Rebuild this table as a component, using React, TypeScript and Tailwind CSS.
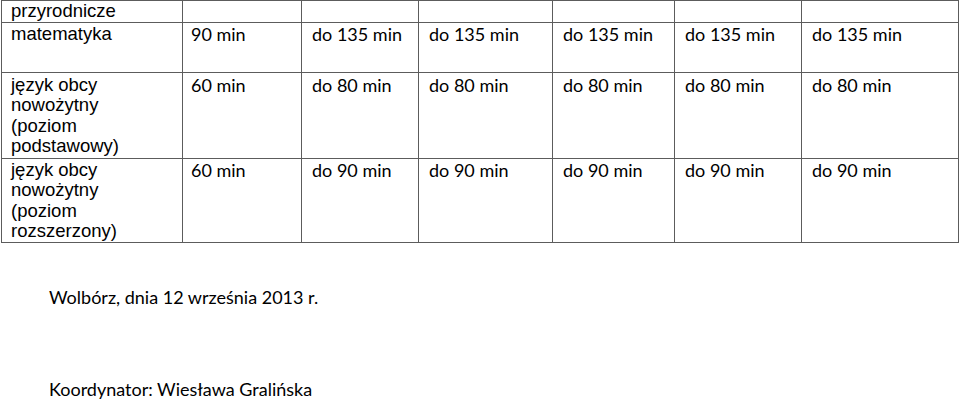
const arial = "font-['Liberation_Sans',Arial,sans-serif] text-[18.5px] leading-[20.5px]";
const cal = "font-['Lato','Open_Sans',sans-serif] text-[18px] leading-[21px]";
const cell = "border border-[#5c5c5c] align-top";

type Row = { label: string; first: string; rest: string; h: string; pt: string };

const rows: Row[] = [
  { label: "przyrodnicze", first: "", rest: "", h: "h-[21px]", pt: "pt-0" },
  { label: "matematyka", first: "90 min", rest: "do 135 min", h: "h-[50px]", pt: "pt-[1px]" },
  { label: "język obcy nowożytny (poziom podstawowy)", first: "60 min", rest: "do 80 min", h: "h-[86px]", pt: "pt-[2px]" },
  { label: "język obcy nowożytny (poziom rozszerzony)", first: "60 min", rest: "do 90 min", h: "h-[84px]", pt: "pt-[1px]" },
];

export default function App() {
  return (
    <div className="h-[400px] w-[960px] overflow-hidden bg-white text-black">
      <table className="ml-[1px] w-[958px] table-fixed border-collapse">
        <colgroup>
          <col className="w-[181px]" />
          <col className="w-[119px]" />
          <col className="w-[117px]" />
          <col className="w-[134px]" />
          <col className="w-[122px]" />
          <col className="w-[127px]" />
          <col className="w-[157px]" />
        </colgroup>
        <tbody>
          {rows.map((r, i) => (
            <tr key={i} className={r.h}>
              <td className={`${cell} px-[9px] ${r.pt} ${arial}`}>
                <div className="w-[120px]">{r.label}</div>
              </td>
              <td className={`${cell} px-[8px] ${r.pt} ${cal}`}>{r.first}</td>
              {[0, 1, 2, 3, 4].map((j) => (
                <td key={j} className={`${cell} px-[10px] ${r.pt} ${cal}`}>
                  {r.rest}
                </td>
              ))}
            </tr>
          ))}
        </tbody>
      </table>
      <div className={`mt-[43px] pl-[49px] ${cal} text-[18.3px] leading-[22px]`}>
        <p>Wolbórz, dnia 12 września 2013 r.</p>
        <p className="mt-[70px]">Koordynator: Wiesława Gralińska</p>
      </div>
    </div>
  );
}
